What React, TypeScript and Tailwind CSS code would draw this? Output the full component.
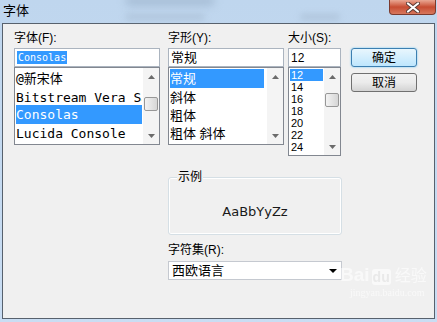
import React from "react";

const CJK = '"Liberation Sans", "Noto Sans CJK SC", sans-serif';
const MONO = '"DejaVu Sans Mono", "Noto Sans CJK SC", monospace';

function Tri({ up }: { up?: boolean }) {
  return (
    <svg width="7" height="4" viewBox="0 0 7 4">
      {up ? <path d="M0 4 L3.5 0 L7 4 Z" fill="#6b6b6b" /> : <path d="M0 0 L3.5 4 L7 0 Z" fill="#6b6b6b" />}
    </svg>
  );
}

function ScrollBar({ before, thumb }: { before: number; thumb: number }) {
  return (
    <div className="flex w-[16px] flex-col bg-[#f4f4f4]">
      <div className="flex h-[17px] items-center justify-center">
        <Tri up />
      </div>
      <div style={{ height: before }} />
      {thumb > 0 && (
        <div
          className="mx-[1px] rounded-[2px] border border-[#979797] bg-gradient-to-r from-[#f3f3f3] to-[#d6d6d6]"
          style={{ height: thumb }}
        />
      )}
      <div className="flex-1" />
      <div className="flex h-[17px] items-center justify-center">
        <Tri />
      </div>
    </div>
  );
}

export default function App() {
  return (
    <div
      className="relative h-[322px] w-[437px] overflow-hidden bg-gradient-to-b from-[#bfd6ee] to-[#c9ddf3]"
      style={{ fontFamily: CJK }}
    >
      {/* blurred background patches in the aero title bar */}
      <div className="pointer-events-none absolute left-[125px] top-[-4px] h-[10px] w-[90px] rounded-full bg-[#8fa6bf] opacity-50 blur-[4px]" />
      <div className="pointer-events-none absolute left-[125px] top-[14px] h-[6px] w-[80px] rounded-full bg-[#9fb3c8] opacity-50 blur-[3px]" />
      <div className="pointer-events-none absolute left-[300px] top-[14px] h-[6px] w-[40px] rounded-full bg-[#9fb3c8] opacity-50 blur-[3px]" />

      {/* title bar */}
      <div className="relative flex h-[23px] items-start">
        <div className="ml-[3px] mt-[3px] text-[13px] leading-[16px] text-black">字体</div>
        <div className="flex-1" />
        <div className="mr-[1px] flex h-[15px] w-[47px] items-center justify-center rounded-b-[4px] border border-t-0 border-[#7b3a2e] bg-gradient-to-b from-[#e9a793] via-[#c74c32] to-[#d7775d]">
          <svg width="14" height="11" viewBox="0 0 14 11">
            <path d="M2 1.5 L12 9.5 M12 1.5 L2 9.5" stroke="#5a3b35" strokeWidth="4" strokeLinecap="round" />
            <path d="M2 1.5 L12 9.5 M12 1.5 L2 9.5" stroke="#ffffff" strokeWidth="2.2" strokeLinecap="round" />
          </svg>
        </div>
      </div>

      {/* client area */}
      <div className="ml-[2px] h-[296px] w-[433px] border border-[#57616d] bg-[#f0f0f0] pl-[11px] pt-[6px]">
        <div className="flex items-start">
          {/* 字体 */}
          <div className="flex w-[146px] flex-col">
            <div className="h-[18px] text-[12px] leading-[16px] text-black">字体(F):</div>
            <div className="flex h-[19px] items-center border border-[#abb4bf] bg-white pl-[2px]">
              <span className="bg-[#3399ff] px-[1px] text-[10px] leading-[13px] text-white" style={{ fontFamily: MONO }}>
                Consolas
              </span>
            </div>
            <div className="flex h-[78px] border border-[#828790] bg-white">
              <div className="flex min-w-0 flex-1 flex-col overflow-hidden p-[1px] text-[13px] leading-[19px] text-black" style={{ fontFamily: MONO }}>
                <div className="h-[19px] whitespace-nowrap">@新宋体</div>
                <div className="h-[19px] overflow-hidden whitespace-nowrap">Bitstream Vera Sans Mono</div>
                <div className="h-[19px] whitespace-nowrap bg-[#3399ff] text-white">Consolas</div>
                <div className="h-[19px] whitespace-nowrap">Lucida Console</div>
              </div>
              <ScrollBar before={12} thumb={14} />
            </div>
          </div>

          {/* 字形 */}
          <div className="ml-[8px] flex w-[116px] flex-col">
            <div className="h-[18px] text-[12px] leading-[16px] text-black">字形(Y):</div>
            <div className="flex h-[19px] items-center border border-[#abb4bf] bg-white pl-[2px] text-[13px] text-black">常规</div>
            <div className="flex h-[78px] border border-[#828790] bg-white">
              <div className="flex min-w-0 flex-1 flex-col overflow-hidden py-[1px] pl-[1px] pr-[3px] text-[13px] leading-[18px] text-black">
                <div className="h-[19px] whitespace-nowrap bg-[#3399ff] leading-[19px] text-white">常规</div>
                <div className="h-[19px] whitespace-nowrap leading-[19px]">斜体</div>
                <div className="h-[18px] whitespace-nowrap">粗体</div>
                <div className="h-[18px] whitespace-nowrap">粗体 斜体</div>
              </div>
              <ScrollBar before={0} thumb={0} />
            </div>
          </div>

          {/* 大小 */}
          <div className="ml-[4px] flex w-[53px] flex-col">
            <div className="h-[18px] text-[12px] leading-[16px] text-black">大小(S):</div>
            <div className="flex h-[19px] items-center border border-[#abb4bf] bg-white pl-[2px] text-[12px] text-black">12</div>
            <div className="flex h-[89px] border border-[#828790] bg-white">
              <div className="flex min-w-0 flex-1 flex-col overflow-hidden p-[1px] text-[11px] leading-[12px] text-black">
                <div className="h-[12px] bg-[#3399ff] pl-[1px] text-white">12</div>
                <div className="h-[12px] pl-[1px]">14</div>
                <div className="h-[12px] pl-[1px]">16</div>
                <div className="h-[12px] pl-[1px]">18</div>
                <div className="h-[12px] pl-[1px]">20</div>
                <div className="h-[12px] pl-[1px]">22</div>
                <div className="h-[12px] pl-[1px]">24</div>
              </div>
              <ScrollBar before={8} thumb={14} />
            </div>
          </div>

          {/* buttons */}
          <div className="ml-[10px] mt-[18px] flex w-[66px] flex-col gap-[6px]">
            <div className="flex h-[19px] items-center justify-center rounded-[3px] border border-[#3c7fb1] bg-gradient-to-b from-[#e8f6fd] to-[#bee6fd] text-[12px] text-black shadow-[0_0_2px_#5cc0f5]">
              确定
            </div>
            <div className="flex h-[19px] items-center justify-center rounded-[3px] border border-[#707070] bg-gradient-to-b from-[#f2f2f2] via-[#ebebeb] to-[#d3d3d3] text-[12px] text-black">
              取消
            </div>
          </div>
        </div>

        {/* lower section */}
        <div className="ml-[154px] flex w-[174px] flex-col">
          <div className="relative mt-[21px] flex h-[58px] items-start justify-center rounded-[3px] border border-[#d5dfe5] pt-[27px] shadow-[inset_0_0_0_1px_#ffffff]">
            <div className="absolute left-[8px] top-[-9px] bg-[#f0f0f0] px-[1px] text-[12px] leading-[16px] text-black">示例</div>
            <div className="text-[13px] leading-[14px] text-[#1a1a1a]" style={{ fontFamily: '"DejaVu Sans", sans-serif' }}>
              AaBbYyZz
            </div>
          </div>
          <div className="mt-[7px] h-[16px] text-[12px] leading-[16px] text-black">字符集(R):</div>
          <div className="mt-[3px] flex h-[19px] items-center border border-[#c5c9d0] bg-white pl-[3px] pr-[4px] text-[13px] text-black">
            <span className="flex-1">西欧语言</span>
            <svg width="8" height="4" viewBox="0 0 8 4">
              <path d="M0 0 L4 4 L8 0 Z" fill="#000" />
            </svg>
          </div>
        </div>
      </div>

      {/* Baidu watermark */}
      <div className="pointer-events-none absolute left-[340px] top-[265px] flex flex-col items-start opacity-60">
        <div className="flex items-end gap-[2px]">
          <span className="text-[19px] font-bold leading-[20px] text-white" style={{ fontFamily: '"Liberation Sans", sans-serif' }}>Bai</span>
          <span className="rounded-[3px] bg-white px-[1px] text-[14px] font-bold leading-[16px] text-[#e6e6e6]" style={{ fontFamily: '"Liberation Sans", sans-serif' }}>du</span>
          <span className="ml-[2px] text-[16px] leading-[18px] text-white">经验</span>
        </div>
        <div className="ml-[10px] mt-[2px] text-[10px] leading-[12px] text-white" style={{ fontFamily: '"Liberation Serif", serif' }}>
          jingyan.baidu.com
        </div>
      </div>
    </div>
  );
}
